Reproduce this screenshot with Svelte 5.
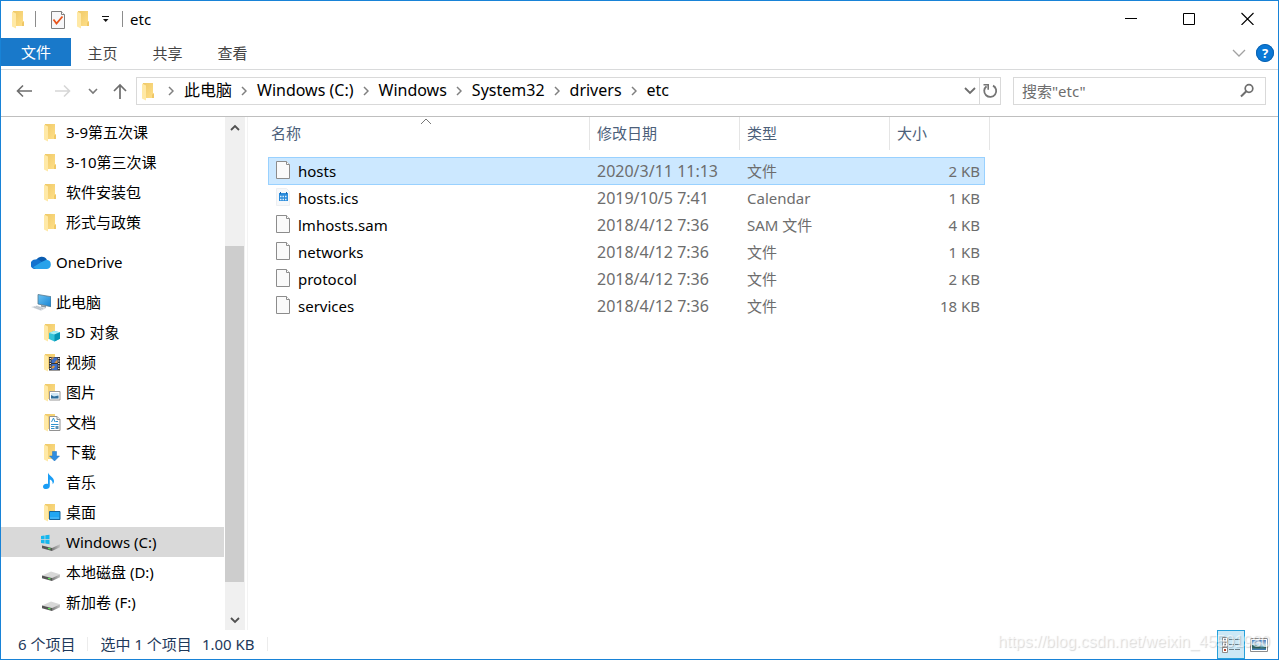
<script>
  const quick = ['3-9第五次课', '3-10第三次课', '软件安装包', '形式与政策'];
  const places = [
    { icon: 'cube', name: '3D 对象' },
    { icon: 'video', name: '视频' },
    { icon: 'picture', name: '图片' },
    { icon: 'document', name: '文档' },
    { icon: 'download', name: '下载' },
    { icon: 'music', name: '音乐' },
    { icon: 'desktop', name: '桌面' },
    { icon: 'windrive', name: 'Windows (C:)' },
    { icon: 'drive', name: '本地磁盘 (D:)' },
    { icon: 'drive', name: '新加卷 (F:)' }
  ];
  const crumbs = ['此电脑', 'Windows (C:)', 'Windows', 'System32', 'drivers', 'etc'];
  const files = [
    { name: 'hosts', date: '2020/3/11 11:13', type: '文件', size: '2 KB' },
    { name: 'hosts.ics', date: '2019/10/5 7:41', type: 'Calendar', size: '1 KB', icon: 'calendar' },
    { name: 'lmhosts.sam', date: '2018/4/12 7:36', type: 'SAM 文件', size: '4 KB' },
    { name: 'networks', date: '2018/4/12 7:36', type: '文件', size: '1 KB' },
    { name: 'protocol', date: '2018/4/12 7:36', type: '文件', size: '2 KB' },
    { name: 'services', date: '2018/4/12 7:36', type: '文件', size: '18 KB' }
  ];
  let place = $state('Windows (C:)');
  let file = $state('hosts');
  let query = $state('');
</script>

<svg class="defs" aria-hidden="true">
  <defs>
    <linearGradient id="fold" x1="0" y1="0" x2="1" y2="1"><stop offset="0" stop-color="#efc968" /><stop offset="1" stop-color="#ffe08a" /></linearGradient>
    <linearGradient id="screen" x1="0" y1="0" x2="1" y2="1"><stop offset="0" stop-color="#6cc3f3" /><stop offset="1" stop-color="#1683d3" /></linearGradient>
    <linearGradient id="metal" x1="0" y1="0" x2="1" y2="0"><stop offset="0" stop-color="#777" /><stop offset="1" stop-color="#c4c4c4" /></linearGradient>
    <linearGradient id="sky" x1="0" y1="0" x2="0" y2="1"><stop offset="0" stop-color="#4d86c8" /><stop offset=".5" stop-color="#cfe8f5" /><stop offset=".7" stop-color="#5f9fb0" /><stop offset="1" stop-color="#3b74b5" /></linearGradient>
  </defs>
</svg>

{#snippet folder()}
  <path d="M4 2h10v10.500h1v4.500H4z" fill="url(#fold)" />
  <path d="M14 12.500h1v4.500h-2v-3z" fill="#efc766" />
  <path d="M3 2.500L7 4.500v15L3 17.500z" fill="#ffe9a6" />
{/snippet}

{#snippet icon(kind)}
  <svg class="icon" viewBox="0 0 20 20" width="20" height="20" aria-hidden="true">
    {#if ['folder', 'cube', 'video', 'picture', 'document', 'download', 'desktop'].includes(kind)}
      {@render folder()}
    {/if}
    {#if kind === 'cube'}
      <path d="M8 11l5-2 6 1.300v6.500L13.500 19.500 8 17z" fill="#35c3d8" />
      <path d="M8 11l5-2 6 1.300-5.500 2.200z" fill="#a8eef5" />
      <path d="M13.500 12.500L19 10.300v6.500L13.500 19.500z" fill="#0795b5" />
    {:else if kind === 'video'}
      <path d="M8 5h11v13.500H8z" fill="#393533" />
      <path d="M10.500 5.500h6v5.500h-6zM10.500 12h6v6h-6z" fill="#3c6fc9" />
      <path d="M10.500 5.500h3l-3 2.500zM14 10l2.500-2.500V11h-3zM10.500 15l2-1.500 1.500 1-1.500 2h-2z" fill="#e0953e" />
      <path d="M9.300 6v12M17.800 6v12" stroke="#fff" stroke-width="1.200" stroke-dasharray="1 1.500" />
    {:else if kind === 'picture'}
      <path d="M8.500 9.500h10.500v8.500H8.500z" fill="#fff" stroke="#989898" />
      <path d="M10 11h7.500v5.500H10z" fill="#cfe6f5" />
      <path d="M10 13l3 1.500 4.500-1v3H10z" fill="#2e6e9b" />
    {:else if kind === 'document'}
      <path d="M8.500 4.500h7.500l3 3v11H8.500z" fill="#fff" stroke="#929292" />
      <path d="M16 4.500v3h3" fill="#eee" stroke="#929292" />
      <path d="M10.500 10l2-4 1.500 4M14.500 9.500h2.500M10 12.500h7.500M10 14.500h3.500M10 16.500h3.500" fill="none" stroke="#3093cf" />
      <path d="M14.500 14h3v3h-3z" fill="#5e93b4" />
    {:else if kind === 'download'}
      <path d="M11.500 9.500h4v4.500h3L13.500 19 8.500 14h3z" fill="#2f8de0" stroke="#1d72bd" stroke-width=".5" />
    {:else if kind === 'desktop'}
      <path d="M8.500 9.500h10.500v8H8.500z" fill="#22a7f3" stroke="#16659d" />
      <path d="M9.500 16h8.500" stroke="#9cdcff" stroke-dasharray="1 1" />
    {:else if kind === 'music'}
      <path d="M7 .5c.5 3 6 4.700 6 8.500 0 1.500-.6 2.500-1.300 3.200.2-2.800-1.200-4.400-2.900-4.700v6.500c0 1.800-1.600 3-3.600 3-2 0-3.200-.9-3.200-2.300 0-1.600 1.700-2.900 3.600-2.900.6 0 1.100.1 1.400.3z" fill="#1a9df5" />
    {:else if kind === 'drive' || kind === 'windrive'}
      <path d="M1 13.500L10 9.500l9 2.800-8 3.700z" fill="#d8d8d8" />
      <path d="M1 13.500l10 2.500v3L1 16.300z" fill="#555" />
      <path d="M11 16l8-3.700v2.900L11 19z" fill="url(#metal)" />
      <path d="M7 16.300l2.500.6" stroke="#5fe35a" stroke-width="1.300" />
      {#if kind === 'windrive'}
        <path d="M0 4l3.600-.6v3.700H0zM4.300 3.300L8.500 2.700v4.400H4.300zM0 7.800h3.600v3.700L0 10.900zM4.300 7.800h4.200v4.400l-4.200-.6z" fill="#16b7ee" />
      {/if}
    {:else if kind === 'cloud'}
      <path d="M5 9a6 6 0 0 1 11-1 L11 13z" fill="#0a5cb0" />
      <path d="M4.500 7.500a5 5 0 0 1 4 .7l7 5.300-3 3.500H4a4.200 4.200 0 0 1 .5-9.500z" fill="#1373cf" />
      <path d="M10.500 10l5-2.300A4.700 4.700 0 0 1 16 17H5l-3-1.700z" fill="#28a2ea" />
    {:else if kind === 'pc'}
      <path d="M7 2.500l13 2.200v10L7 12z" fill="url(#screen)" stroke="#57788e" stroke-width=".8" />
      <path d="M10 13l5 1v1.800l-5-1z" fill="#8e9aa1" />
      <path d="M0 15l6-1.500 9 2.800-5 2.400z" fill="#d6dbe0" />
      <path d="M3 15l7 2.600M5 14.400l7 2.400" stroke="#a9b2ba" stroke-width=".6" />
    {:else if kind === 'file'}
      <path d="M3.500.5h10l3 3v14h-13z" fill="#fafafa" stroke="#8c8c8c" />
      <path d="M13.500.5v3h3" fill="#fff" stroke="#8c8c8c" />
    {:else if kind === 'calendar'}
      <path d="M3.500.5h10l3 3v14h-13z" fill="#f6f8fa" stroke="#eceff2" />
      <path d="M6 5h9v8H6z" fill="#2a8bdb" />
      <path d="M7 8.500h7M7 11.500h7" stroke="#d8ecfb" stroke-dasharray="1.500 1" stroke-width="1.500" />
      <path d="M7.500 4v2M13.500 4v2" stroke="#1768b0" />
    {:else if kind === 'check'}
      <path d="M3.500 2.500h10l3 3v14h-13z" fill="#f7f7f9" stroke="#808080" />
      <path d="M13.500 2.500v3h3" fill="#fff" stroke="#808080" />
      <path d="M5.500 10.500l3 4 6-7" fill="none" stroke="#e8541c" stroke-width="1.800" />
    {/if}
  </svg>
{/snippet}

{#snippet placeRow(kind, name, top)}
  <li>
    <button class="place" class:top class:current={place === name} onclick={() => (place = name)}>
      {@render icon(kind)}<span>{name}</span>
    </button>
  </li>
{/snippet}

<div class="window">
  <header class="title">
    {@render icon('folder')}
    <i class="rule"></i>
    <button class="tool" aria-label="属性">{@render icon('check')}</button>
    <button class="tool" aria-label="新建文件夹">{@render icon('folder')}</button>
    <button class="tool small" aria-label="自定义快速访问工具栏">
      <svg width="8" height="8" viewBox="0 0 8 8"><path d="M0 1.500h7" stroke="#111" /><path d="M1 4h5.500L3.700 7z" fill="#111" /></svg>
    </button>
    <i class="rule"></i>
    <h1>etc</h1>
    <div class="controls">
      <button aria-label="最小化"><svg width="13" height="13" viewBox="0 0 13 13"><path d="M0 6.500h12" stroke="#000" /></svg></button>
      <button aria-label="最大化"><svg width="13" height="13" viewBox="0 0 13 13"><path d="M.5 1.500h11v11H.5z" fill="none" stroke="#000" /></svg></button>
      <button aria-label="关闭"><svg width="13" height="13" viewBox="0 0 13 13"><path d="M.5 1l12 12M12.500 1l-12 12" stroke="#000" stroke-width="1.100" /></svg></button>
    </div>
  </header>

  <nav class="tabs" aria-label="功能区">
    <button class="main">文件</button>
    <button>主页</button>
    <button>共享</button>
    <button>查看</button>
    <button class="fold" aria-label="展开功能区"><svg width="14" height="8" viewBox="0 0 14 8"><path d="M1 1l6 6 6-6" fill="none" stroke="#a2a2a2" stroke-width="1.300" /></svg></button>
    <button class="help" aria-label="帮助">?</button>
  </nav>

  <div class="address">
    <div class="history">
      <button aria-label="后退"><svg width="16" height="16" viewBox="0 0 16 16"><path d="M16 8H1.500M7 2.500L1.500 8 7 13.500" fill="none" stroke="#6e6e6e" stroke-width="1.600" /></svg></button>
      <button aria-label="前进"><svg width="16" height="16" viewBox="0 0 16 16"><path d="M0 8h14.500M9 2.500L14.500 8 9 13.500" fill="none" stroke="#d6d6d6" stroke-width="1.600" /></svg></button>
      <button class="recent" aria-label="最近浏览的位置"><svg width="10" height="8" viewBox="0 0 10 8"><path d="M1 2l4 4 4-4" fill="none" stroke="#7a7a7a" stroke-width="1.600" /></svg></button>
      <button class="up" aria-label="上移"><svg width="16" height="16" viewBox="0 0 16 16"><path d="M8 16V2M2 8l6-6 6 6" fill="none" stroke="#6e6e6e" stroke-width="1.700" /></svg></button>
    </div>
    <div class="path">
      {@render icon('folder')}
      {#each crumbs as crumb}
        <svg class="sep" width="6" height="10" viewBox="0 0 6 10"><path d="M1 1l4 4-4 4" fill="none" stroke="#808080" stroke-width="1.500" /></svg>
        <button class="crumb">{crumb}</button>
      {/each}
      <button class="more" aria-label="以前的位置"><svg width="12" height="8" viewBox="0 0 12 8"><path d="M1 1l5 5 5-5" fill="none" stroke="#6e6e6e" stroke-width="1.800" /></svg></button>
      <button class="reload" aria-label="刷新"><svg width="16" height="16" viewBox="0 0 16 16"><path d="M11 2.600A6 6 0 1 1 4.500 3.200" fill="none" stroke="#757575" stroke-width="1.800" /><path d="M1.500 1.800h4.700v5" fill="none" stroke="#757575" stroke-width="1.600" /></svg></button>
    </div>
    <label class="search">
      <input type="text" aria-label="搜索" placeholder={'搜索"etc"'} bind:value={query} />
      <svg width="16" height="16" viewBox="0 0 16 16"><circle cx="10" cy="5.500" r="3.800" fill="none" stroke="#6e6e6e" stroke-width="1.700" /><path d="M7.300 8.200L2 13.500" stroke="#6e6e6e" stroke-width="2" /></svg>
    </label>
  </div>

  <div class="body">
    <aside>
      <ul class="tree">
        {#each quick as name}{@render placeRow('folder', name, false)}{/each}
        <li class="gap"></li>
        {@render placeRow('cloud', 'OneDrive', true)}
        <li class="gap"></li>
        {@render placeRow('pc', '此电脑', true)}
        {#each places as p}{@render placeRow(p.icon, p.name, false)}{/each}
      </ul>
      <div class="scrollbar">
        <button aria-label="向上滚动"><svg width="10" height="8" viewBox="0 0 10 8"><path d="M1 6l4-4 4 4" fill="none" stroke="#505050" stroke-width="1.800" /></svg></button>
        <div class="track"><div class="thumb"></div></div>
        <button aria-label="向下滚动"><svg width="10" height="8" viewBox="0 0 10 8"><path d="M1 2l4 4 4-4" fill="none" stroke="#505050" stroke-width="1.800" /></svg></button>
      </div>
    </aside>

    <main>
      <table>
        <colgroup><col class="c-name" /><col class="c-mid" /><col class="c-mid" /><col class="c-size" /><col class="c-end" /></colgroup>
        <thead>
          <tr>
            <th aria-sort="ascending">名称<svg class="sort" width="12" height="7" viewBox="0 0 12 7"><path d="M1 6l5-5 5 5" fill="none" stroke="#777" /></svg></th>
            <th>修改日期</th>
            <th>类型</th>
            <th colspan="2">大小</th>
          </tr>
        </thead>
        <tbody>
          {#each files as f}
            <tr class:selected={file === f.name} onclick={() => (file = f.name)}>
              <td><div class="name">{@render icon(f.icon ?? 'file')}<span>{f.name}</span></div></td>
              <td class="date">{f.date}</td>
              <td>{f.type}</td>
              <td>{f.size}</td>
            </tr>
          {/each}
        </tbody>
      </table>
    </main>
  </div>

  <footer>
    <span class="count">6 个项目</span>
    <span class="chosen">选中 1 个项目</span>
    <span class="bytes">1.00 KB</span>
    <div class="views">
      <button class="on" aria-label="详细信息">
        <svg width="20" height="18" viewBox="0 0 20 18">
          <path d="M1.500 1.500h5v4.500h-5zM1.500 6.500h5v4.500h-5zM1.500 11.500h5v5h-5z" fill="#fff" stroke="#8d8d8d" />
          <path d="M3 3.500h2M3 8.500h2" stroke="#789" stroke-width="1.500" /><path d="M3 13h2v2H3z" fill="#b5452c" />
          <path d="M8 3.500h5M14 3.500h5M8 8.500h5M14 8.500h5M8 13.500h5M14 13.500h5" stroke="#6d7f88" />
        </svg>
      </button>
      <button aria-label="大图标">
        <svg width="18" height="14" viewBox="0 0 18 14">
          <path d="M.5.5h17v13H.5z" fill="#fff" stroke="#8d8d8d" /><path d="M2 2h14v10H2z" fill="url(#sky)" />
          <path d="M2 7l4 .5 5 2 5-.5v1.500H2z" fill="#32645e" /><path d="M4 5.500l4-2 5 2z" fill="#fff" />
        </svg>
      </button>
    </div>
    <span class="mark">https://blog.csdn.net/weixin_45501980</span>
  </footer>
</div>

<style>
  :global(body) { margin: 0; background: #fff; }
  .defs { position: absolute; width: 0; height: 0; }
  .window {
    box-sizing: border-box;
    height: 100vh;
    display: grid;
    grid-template-rows: 37px 32px 47px minmax(0, 1fr) 29px;
    grid-template-columns: minmax(0, 1fr);
    border: 1px solid #1883d7;
    background: #fff;
    color: #000;
    font: 15px/20px "Noto Sans", "Noto Sans CJK SC", sans-serif;
  }
  button { font: inherit; color: inherit; background: none; border: 0; padding: 0; margin: 0; display: flex; align-items: center; justify-content: center; white-space: nowrap; }
  svg { display: block; flex: none; }

  .title { display: flex; align-items: center; padding: 0 0 2px 8px; }
  .rule { width: 1px; height: 16px; background: #8c8c8c; margin-left: 6px; }
  .title .rule + .tool { margin-left: 12px; }
  .tool + .tool { margin-left: 6px; }
  .tool.small { width: 8px; margin-left: 8px; }
  .small + .rule { margin-left: 12px; }
  h1 { margin: 0 0 0 7px; font-size: 15px; font-weight: 400; }
  .controls { display: flex; align-self: stretch; margin-left: auto; margin-right: 2px; }
  .controls button { width: 58px; }

  .tabs { display: flex; align-items: flex-start; border-bottom: 1px solid #d9dadb; color: #444; box-sizing: border-box; }
  .tabs button { width: 65px; height: 29px; }
  .tabs .main { width: 70px; height: 28px; margin-right: -1px; background: #1979ca; color: #fff; }
  .tabs .fold { width: 14px; margin-left: auto; }
  .tabs .help { width: 18px; height: 18px; margin: 6px 4px 0 10px; border-radius: 50%; background: #0a78d6; box-shadow: inset 0 0 0 1px #0b62b0; color: #fff; font-weight: 700; font-size: 13px; line-height: 18px; }

  .address { display: flex; align-items: center; gap: 12px; padding: 0 12px 4px 15px; border-bottom: 1px solid #bfbfbf; box-sizing: border-box; }
  .history { display: flex; align-items: center; margin-right: -4px; }
  .history button { width: 16px; height: 28px; margin-right: 23px; }
  .history .recent { width: 10px; margin: 0 14px 0 -6px; }
  .history .up { margin: 0; }
  .path { flex: 1; display: flex; align-items: center; box-sizing: border-box; height: 28px; border: 1px solid #d9d9d9; padding-left: 2px; }
  .sep { margin: 0 10px 0 9px; }
  .crumb { font-size: 16px; line-height: 20px; height: 22px; align-items: flex-start; }
  .more { margin-left: auto; width: 19px; height: 26px; }
  .reload { width: 21px; height: 26px; border-left: 1px solid #d9d9d9; }
  .search { flex: none; display: flex; align-items: center; box-sizing: border-box; width: 253px; height: 28px; border: 1px solid #d9d9d9; padding: 0 10px 0 8px; }
  .search input { flex: 1; min-width: 0; border: 0; outline: 0; padding: 0; background: none; font: inherit; color: #000; }
  .search input::placeholder { color: #6d6d6d; opacity: 1; }

  .body { display: grid; grid-template-columns: 247px minmax(0, 1fr); min-height: 0; }
  aside { display: flex; min-height: 0; border-right: 1px solid #f3f3f3; padding-right: 2px; }
  ul { flex: 1; margin: 0; padding: 0; list-style: none; overflow: hidden; }
  .gap { height: 10px; }
  .place { width: calc(100% - 1px); height: 30px; justify-content: flex-start; gap: 5px; padding-left: 40px; }
  .place.top { padding-left: 30px; }
  .place.current { background: #d9d9d9; }
  .scrollbar { width: 20px; display: flex; flex-direction: column; background: #f0f0f0; }
  .scrollbar button { height: 21px; width: 19px; }
  .track { flex: 1; display: grid; grid-template-rows: 108fr 336fr 27fr; }
  .thumb { grid-row: 2; width: 19px; background: #cdcdcd; }

  main { padding-left: 20px; overflow: hidden; }
  table { table-layout: fixed; width: 722px; border-collapse: separate; border-spacing: 0; }
  .c-name { width: 322px; }
  .c-mid { width: 150px; }
  .c-size { width: 95px; }
  .c-end { width: 5px; }
  th { position: relative; box-sizing: border-box; height: 33px; padding: 0 7px 2px; border-right: 1px solid #e5e5e5; font-weight: 400; text-align: left; color: #4c607a; }
  th:first-child { padding-left: 3px; }
  .sort { position: absolute; top: 1px; left: 152px; }
  tbody::before { content: ""; display: block; height: 7px; }
  td { box-sizing: border-box; height: 27px; padding: 0 7px 2px; color: #6d6d6d; white-space: nowrap; }
  td:first-child { padding: 0 5px 2px; color: #000; }
  td:last-child { padding-right: 5px; text-align: right; }
  .date { font-size: 16px; }
  .name { display: flex; align-items: center; gap: 5px; }
  .selected td { height: 28px; padding-bottom: 0; background: #cce8ff; border: solid #99d1ff; border-width: 1px 0; }
  .selected td:first-child { border-left-width: 1px; padding: 0 5px 0 4px; }
  .selected td:last-child { border-right-width: 1px; padding-right: 4px; }

  footer { position: relative; display: flex; align-items: center; padding: 0 0 2px 17px; color: #1e395b; }
  footer span { white-space: nowrap; }
  .chosen { margin-left: 12px; padding-left: 12px; border-left: 1px solid #ececec; line-height: 14px; }
  .bytes { margin-left: 10px; padding-right: 12px; border-right: 1px solid #ececec; line-height: 14px; }
  .views { display: flex; align-self: stretch; margin: 0 5px -2px auto; }
  .views button { width: 28px; box-sizing: border-box; }
  .views .on { border: 1px solid #26a0da; background: #cbe8f6; }
  .mark { position: absolute; right: 8px; top: 3px; font: 16px/18px "Liberation Sans", Arial, sans-serif; color: rgba(255, 255, 255, 0.6); text-shadow: 1px 1px 1px rgba(0, 0, 0, 0.16); pointer-events: none; }
</style>
